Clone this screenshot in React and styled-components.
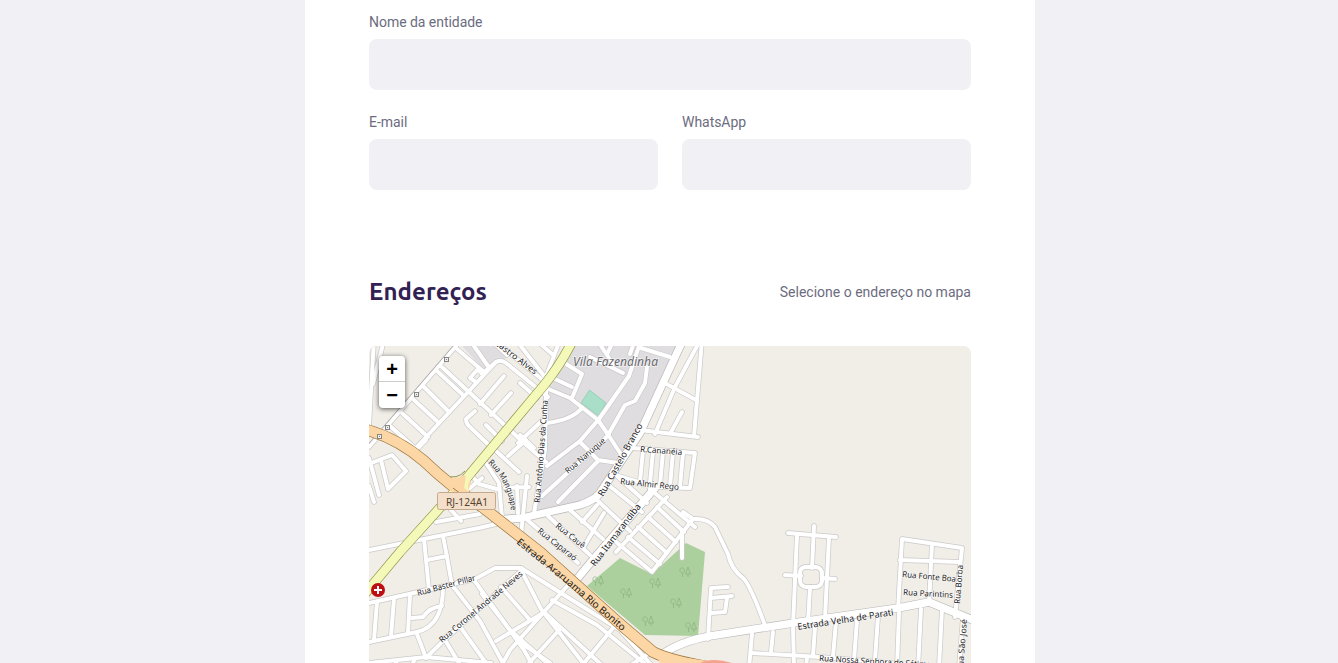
import React from "react";
import styled, { createGlobalStyle } from "styled-components";

const GlobalStyle = createGlobalStyle`
  * { box-sizing: border-box; margin: 0; padding: 0; }
  body { background: #f0f0f5; overflow: hidden; font: 400 14px/17px Roboto, sans-serif; color: #6c6c80; }
`;

const Page = styled.main`
  display: flex;
  justify-content: center;
  height: 663px;
  overflow: hidden;
  padding-left: 2px;
`;

const Form = styled.form`
  width: 730px;
  height: 900px;
  flex: none;
  padding: 14px 64px 0;
  background: #fff;
`;

const Row = styled.div`
  display: flex;
  gap: 24px;
  margin-bottom: 24px;
`;

const Field = styled.label`
  flex: 1;
  display: flex;
  flex-direction: column;
  gap: 8px;
  min-width: 0;
  letter-spacing: -0.04px;
`;

const Input = styled.input`
  width: 100%;
  height: 51px;
  border: 0;
  border-radius: 8px;
  padding: 16px 24px;
  background: #f0f0f5;
  font: 16px Roboto, sans-serif;
`;

const SectionHeader = styled.div`
  display: flex;
  align-items: center;
  justify-content: space-between;
  height: 28px;
  margin: 88px 0 40px;
`;

const Title = styled.h2`
  color: #322153;
  font: 700 24px/28px Ubuntu, "Noto Sans", sans-serif;
  letter-spacing: 0.1px;
`;

const MapFrame = styled.div`
  position: relative;
  width: 602px;
  height: 350px;
  border-radius: 8px;
  overflow: hidden;
  background: #f1eee8;
`;

const MapSvg = styled.svg`
  display: block;
`;

const ZoomControl = styled.div`
  position: absolute;
  top: 10px;
  left: 10px;
  width: 26px;
  border-radius: 4px;
  background: #fff;
  box-shadow: 0 1px 5px rgba(0, 0, 0, 0.65);
`;

const ZoomButton = styled.button`
  display: block;
  width: 26px;
  height: 26px;
  border: 0;
  border-bottom: ${(p) => (p.$divided ? "1px solid #ccc" : "0")};
  background: none;
  color: #000;
  text-align: center;
  font: 700 20px/24px "Liberation Sans", sans-serif;
`;

const STREETS = [
  "M374 340L369 425", "M384 340L373 384",
  "M456 346L369 447",
  "M457 349L484 372", "M474 346L488 366", "M491 340L507 355", "M482 374L496 362Q501 359 506 363L548 397",
  "M496 362L414 450", "M442 367L524 443L546 462", "M437 371L463 395",
  "M424 387L449 412", "M414 400L439 423", "M402 413L428 437", "M390 426L416 449",
  "M482 373L477 370L470 378L476 382",
  "M504 376L480 404", "M511 393L491 415", "M475 411L466 419Q466 424 470 427L492 448", "M486 425L502 441",
  "M494 340L545 382", "M516 340L545 377", "M560 340L545 379", "M536 340L552 354",
  "M520 383L537 398", "M518 443L546 417", "M520 435L534 448",
  "M563 362L582 374L572 398", "M555 379L572 387", "M546 388L570 398L598 420L609 436L622 456",
  "M582 408Q572 420 547 423", "M641 340L629 376L599 419L580 441L547 466",
  "M647 367L645 383L635 401L625 405L608 435",
  "M641 348L670 357", "M590 357L623 373", "M601 346L613 364", "M614 340L607 354", "M635 340L630 354",
  "M702 340L694 436", "M697 346L675 387L655 434", "M640 430L698 437", "M663 382L696 400", "M682 412L671 432",
  "M546 390L545 450L534 513", "M542 496L603 441L609 434", "M558 502L598 461", "M580 442L598 460L618 463",
  "M632 448L695 453L690 488L655 487L615 475",
  "M643 451L640 481", "M653 451L650 483", "M663 452L660 485", "M673 452L670 486", "M683 453L680 487",
  "M650 489L695 527", "M667 497L616 552", "M683 512L693 519L652 572L615 541",
  "M657 507L684 532", "M648 517L676 542", "M638 527L667 553", "M628 537L660 564", "M682 532L682 558",
  "M693 519Q708 518 715 527L728 554Q731 569 743 578Q750 584 766 628",
  "M597 500L630 531", "M607 484L642 512", "M618 477L647 503", "M604 513L583 548", "M597 505L582 522", "M570 510L603 539",
  "M548 516L590 555", "M525 518L578 563", "M527 476L521 535",
  "M495 450L519 472", "M508 456L526 440", "M484 460L499 483L502 518", "M471 475L479 484L497 489", "M505 488L529 487", "M517 486L518 513", "M451 510L461 521", "M470 488L482 478",
  "M369 550L419 540L479 528L526 517", "M436 522L480 514", "M424 539L429 590", "M443 536L447 557L452 585L480 621L503 663",
  "M369 458L379 495", "M369 464L392 455L406 471L388 489L381 460", "M369 486L374 502", "M414 452L426 440",
  "M427 560L447 556", "M369 603L418 592L475 579L495 568L521 568",
  "M377 602L374 640", "M394 599L391 636", "M410 595L408 633", "M369 642L417 632Q443 626 443 587", "M412 618L423 617Q430 607 442 606",
  "M417 634L426 658", "M369 663L426 657L491 663", "M426 658L441 643L522 570", "M415 659L410 669", "M397 661L392 670",
  "M474 580L524 650L534 668", "M501 587L530 620", "M461 628L486 663", "M445 640L459 663", "M496 641L543 613", "M482 594L510 630L555 670",
  "M521 568L553 588L620 630L654 668", "M520 568L541 609L583 663", "M569 584L543 613L510 650L499 670",
  "M552 600L597 625L644 663", "M545 613L605 668", "M561 628L529 663", "M613 628L580 668", "M648 654L626 668", "M520 642L550 663",
  "M788 533L836 537", "M814 526L812 568", "M797 535L793 625L794 668", "M829 537L825 618", "M785 575L801 576", "M822 578L835 579", "M810 587L808 623",
  "M805 567H816Q822 568 822 574V581Q821 587 815 587H806Q800 586 800 580V573Q800 568 805 567",
  "M728 587L711 588L708 639", "M711 598L732 596", "M727 598L725 612L711 613",
  "M752 634L749 668", "M773 632L771 652", "M752 653L820 657L900 664", "M815 627L813 656", "M836 622L833 656", "M807 657L806 668",
  "M898 610L902 539L962 548L955 617", "M932 544L929 604", "M900 560L960 562",
  "M857 620L854 660", "M878 616L875 660", "M899 612L897 668", "M921 609L918 668", "M942 609L939 668", "M963 617L959 668",
];

const MAIN_STREETS = [
  "M683 340L663 383L640 433L619 464L600 493Q595 500 580 505L522 518L495 520",
  "M655 488L597 555L577 579",
  "M660 656Q678 642 710 636L800 622L898 608L929 602L975 621",
];

const YELLOW = "M573 340Q561 364 545 384L465 480L400 552L364 595";
const ORANGE = "M364 429Q397 438 424 461Q451 487 481 506L540 552L620 624L653 652Q675 663 735 671";

const TREES = [[598, 581], [626, 593], [655, 583], [685, 572], [676, 603], [648, 621], [691, 627]];
const GATES = [[446.5, 359.5], [416.5, 394.5], [387.5, 427.5], [379.5, 436.5]];

const LABELS = [
  ["Castro Alves", "M494 344L535 375", 8.3, 51],
  ["Rua Antônio Dias da Cunha", "M540 503Q544 450 548 400", 8.3, 103],
  ["Rua Nanuque", "M568 474L608 440", 8.3, 50],
  ["Rua Castelo Branco", "M603 497L623 462L643 425", 9.2, 82],
  ["R.Cananéia", "M640 452L682 455", 8.3, 42],
  ["Rua Almir Rego", "M620 484L679 490", 8.3, 59],
  ["Rua Manguape", "M488 463Q508 481 511 510", 8.3, 54],
  ["Rua Itamarandiba", "M595 567L641 507", 9.2, 76],
  ["Rua Cauê", "M555 527L584 550", 8.3, 35],
  ["Rua Caparaó", "M537 532L575 562", 8.3, 47],
  ["Estrada Araruama Rio Bonito", "M516 543L569 586L622 631", 9.7, 138],
  ["Rua Baster Pillar", "M418 596L477 580", 8.3, 60],
  ["Rua Coronel Andrade Neves", "M442 643L523 575", 8.3, 106],
  ["Estrada Velha de Parati", "M798 630L895 615", 9.2, 97],
  ["Rua Nossa Senhora de Fátima", "M819 661L940 668", 8.3, 112],
  ["Rua Fonte Boa", "M902 577L957 582", 8.3, 54],
  ["Rua Parintins", "M903 595L954 598", 8.3, 50],
  ["Rua Borba", "M960 604L963 565", 8.3, 39],
  ["Rua São José", "M963 672L967 619", 8.3, 53],
];

const Label = styled.text`
  font-family: "Noto Sans", sans-serif;
  fill: #1c1c1e;
  stroke: ${(p) => (p.$onHighway ? "none" : "rgba(255,255,255,0.65)")};
  stroke-width: 1.2px;
  paint-order: stroke;
`;

const PlaceLabel = styled.text`
  font: italic 12px "Noto Sans", sans-serif;
  fill: #68686d;
  stroke: rgba(255, 255, 255, 0.6);
  stroke-width: 1.5px;
  paint-order: stroke;
`;

const ShieldLabel = styled.text`
  font: 10.5px "Noto Sans", sans-serif;
  fill: #55442d;
`;

function Strokes({ paths, color, width }) {
  return (
    <g fill="none" stroke={color} strokeWidth={width} strokeLinecap="round" strokeLinejoin="round">
      {paths.map((d) => <path key={d} d={d} />)}
    </g>
  );
}

function StreetMap() {
  return (
    <MapSvg width="602" height="350" viewBox="369 346 602 350" aria-label="Mapa">
      <rect x="369" y="346" width="602" height="350" fill="#f1eee8" />
      <path fill="#dfdddf" d="M574 346H680L660 386L637 435L600 493L580 504L533 515L543 446L546 386ZM462 346H500L507 357L485 371Z" />
      <path fill="#acd09d" d="M620 558L587 586L645 635L698 636L705 552L686 543L652 574Z" />
      <path fill="#a9dfc8" stroke="#82c8ae" strokeWidth=".7" d="M589.500 390L606 403L599 416L581 403Z" />
      <g fill="none" stroke="#86b07c" strokeWidth=".7">
        {TREES.map(([x, y]) => (
          <path key={`${x}-${y}`} d={`M${x - 2.5} ${y + 5}V${y + 1}C${x - 7} ${y} ${x - 5} ${y - 5} ${x - 2.5} ${y - 4}C${x} ${y - 4} ${x} ${y + 1} ${x - 2.5} ${y + 1}M${x + 3} ${y + 5}V${y + 2}H${x + 0.5}L${x + 3} ${y - 5}L${x + 5.5} ${y + 2}H${x + 3}`} />
        ))}
      </g>
      <Strokes paths={STREETS} color="#cbc9ca" width={5.4} />
      <Strokes paths={MAIN_STREETS} color="#b9b7b7" width={8.8} />
      <Strokes paths={STREETS} color="#fff" width={4} />
      <Strokes paths={MAIN_STREETS} color="#fff" width={7.4} />
      <path d="M456 346L369 447" stroke="#b2b0b0" strokeWidth="1" fill="none" transform="translate(-2 -1)" />
      <Strokes paths={[YELLOW]} color="#93984c" width={10} />
      <Strokes paths={[ORANGE]} color="#a17a42" width={11.6} />
      <Strokes paths={[YELLOW]} color="#f4f8b8" width={8.6} />
      <path d="M437 470Q446 477 452 478Q459 478 464 475L471 481L468 494L460 492Z" fill="#fcd6a4" />
      <path d="M445 475.500Q457 480 465 471" fill="none" stroke="#93984c" />
      <path d="M476 473L469 482Q466 489 472 496L464 489L466 475Z" fill="#f4f8b8" />
      <Strokes paths={[ORANGE]} color="#fcd6a4" width={10.2} />
      <path d="M653 650Q670 657 733 664L733 672H665Z" fill="#fcd6a4" />
      <path d="M700 663Q712 657 732 663Z" fill="#f6a38d" />
      <path d="M453 488L461 494" stroke="#a17a42" strokeWidth="1" />
      {GATES.map(([x, y]) => (
        <g key={x}>
          <rect x={x - 2} y={y - 2} width="4" height="4" fill="#eee" stroke="#858585" />
          <rect x={x - 0.5} y={y - 0.5} width="1" height="1" fill="#858585" />
        </g>
      ))}
      {LABELS.map(([name, d, size, length], i) => (
        <React.Fragment key={name}>
          <path id={`street-${i}`} d={d} fill="none" />
          <Label fontSize={size} $onHighway={name.startsWith("Estrada Araruama")}>
            <textPath href={`#street-${i}`} textLength={length} lengthAdjust="spacingAndGlyphs">{name}</textPath>
          </Label>
        </React.Fragment>
      ))}
      <PlaceLabel x="573" y="365.500" textLength="85" lengthAdjust="spacingAndGlyphs">Vila Fazendinha</PlaceLabel>
      <rect x="437.500" y="492.500" width="58" height="17" rx="2" fill="#f4dfcb" stroke="#c5a98c" />
      <ShieldLabel x="446" y="505.500" textLength="42" lengthAdjust="spacingAndGlyphs">RJ-124A1</ShieldLabel>
      <circle cx="378" cy="590" r="7" fill="#bd0e14" />
      <path d="M378 586V594M374 590H382" stroke="#fff" strokeWidth="2" />
    </MapSvg>
  );
}

export default function App() {
  return (
    <>
      <GlobalStyle />
      <Page>
        <Form>
          <Row>
            <Field>Nome da entidade<Input type="text" name="name" /></Field>
          </Row>
          <Row>
            <Field>E-mail<Input type="email" name="email" /></Field>
            <Field>WhatsApp<Input type="text" name="whatsapp" /></Field>
          </Row>
          <SectionHeader>
            <Title>Endereços</Title>
            <span>Selecione o endereço no mapa</span>
          </SectionHeader>
          <MapFrame>
            <StreetMap />
            <ZoomControl>
              <ZoomButton type="button" $divided>+</ZoomButton>
              <ZoomButton type="button">−</ZoomButton>
            </ZoomControl>
          </MapFrame>
        </Form>
      </Page>
    </>
  );
}
